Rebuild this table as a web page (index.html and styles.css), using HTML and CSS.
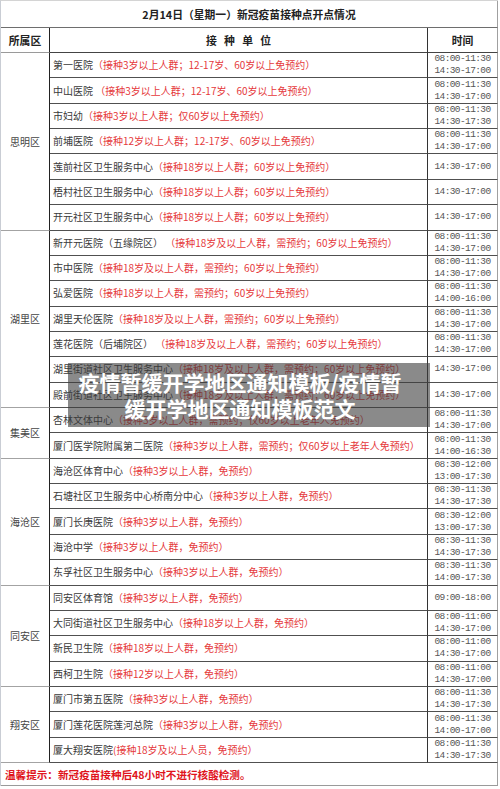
FILE: index.html
```html
<!DOCTYPE html>
<html lang="zh-CN">
<head>
<meta charset="utf-8">
<title>2月14日新冠疫苗接种点开点情况</title>
<link rel="stylesheet" href="styles.css">
</head>
<body>
<table class="sheet">
  <colgroup>
    <col class="c-area">
    <col class="c-unit">
    <col class="c-time">
  </colgroup>
  <tr class="r-title"><td colspan="3" class="title">2月14日（星期一）新冠疫苗接种点开点情况</td></tr>
  <tr class="r-head">
    <th class="h-area">所属区</th>
    <th class="h-unit">接&nbsp;&nbsp;&nbsp;种&nbsp;&nbsp;&nbsp;单&nbsp;&nbsp;&nbsp;位</th>
    <th class="h-time">时间</th>
  </tr>

  <tr class="row"><td class="area" rowspan="7">思明区</td><td class="unit">第一医院<span class="note">（接种3岁以上人群；12-17岁、60岁以上免预约）</span></td><td class="time">08:00-11:30<br>14:30-17:00</td></tr>
  <tr class="row"><td class="unit">中山医院 <span class="note">（接种3岁以上人群；12-17岁、60岁以上免预约）</span></td><td class="time">08:00-11:30<br>14:30-17:00</td></tr>
  <tr class="row"><td class="unit">市妇幼<span class="note">（接种3岁以上人群；仅60岁以上免预约）</span></td><td class="time">08:00-11:30<br>14:30-17:30</td></tr>
  <tr class="row"><td class="unit">前埔医院<span class="note">（接种12岁以上人群；12-17岁、60岁以上免预约）</span></td><td class="time">08:00-11:30<br>14:30-17:00</td></tr>
  <tr class="row"><td class="unit">莲前社区卫生服务中心<span class="note">（接种18岁以上人群；60岁以上免预约）</span></td><td class="time">14:30-17:00</td></tr>
  <tr class="row"><td class="unit">梧村社区卫生服务中心<span class="note">（接种18岁以上人群；60岁以上免预约）</span></td><td class="time">14:30-17:00</td></tr>
  <tr class="row"><td class="unit">开元社区卫生服务中心<span class="note">（接种18岁以上人群；60岁以上免预约）</span></td><td class="time">14:30-17:00</td></tr>

  <tr class="row"><td class="area" rowspan="7">湖里区</td><td class="unit">新开元医院（五缘院区） <span class="note">（接种18岁及以上人群，需预约；60岁以上免预约）</span></td><td class="time">08:00-11:30<br>14:30-17:00</td></tr>
  <tr class="row"><td class="unit">市中医院<span class="note">（接种18岁及以上人群，需预约；60岁以上免预约）</span></td><td class="time">08:00-11:30<br>14:30-17:00</td></tr>
  <tr class="row"><td class="unit">弘爱医院<span class="note">（接种18岁以上人群，需预约；60岁以上免预约）</span></td><td class="time">08:00-11:30<br>14:00-16:00</td></tr>
  <tr class="row"><td class="unit">湖里天伦医院<span class="note">（接种18岁及以上人群，需预约；60岁以上免预约）</span></td><td class="time">08:00-11:30<br>14:30-17:00</td></tr>
  <tr class="row"><td class="unit">莲花医院（后埔院区） <span class="note">（接种18岁及以上人群，需预约；60岁以上免预约）</span></td><td class="time">08:00-11:30<br>14:30-17:00</td></tr>
  <tr class="row"><td class="unit">湖里街道社区卫生服务中心<span class="note">（接种18岁及以上人群，需预约；60岁以上免预约）</span></td><td class="time">14:30-17:00</td></tr>
  <tr class="row"><td class="unit">殿前街道社区卫生服务中心<span class="note">（接种18岁及以上人群，需预约；60岁以上免预约）</span></td><td class="time">14:30-17:00</td></tr>

  <tr class="row"><td class="area" rowspan="2">集美区</td><td class="unit">杏林文体中心<span class="note">（接种3岁以上人群，需预约；仅60岁以上老年人免预约）</span></td><td class="time">08:00-11:30<br>14:30-17:00</td></tr>
  <tr class="row"><td class="unit">厦门医学院附属第二医院<span class="note">（接种3岁以上人群，需预约；仅60岁以上老年人免预约）</span></td><td class="time">08:00-11:30<br>14:00-16:30</td></tr>

  <tr class="row"><td class="area" rowspan="5">海沧区</td><td class="unit">海沧区体育中心<span class="note">（接种3岁以上人群，免预约）</span></td><td class="time">08:30-12:00<br>13:00-17:30</td></tr>
  <tr class="row"><td class="unit">石塘社区卫生服务中心桥南分中心<span class="note">（接种3岁以上人群，免预约）</span></td><td class="time">08:30-11:30<br>14:30-17:30</td></tr>
  <tr class="row"><td class="unit">厦门长庚医院<span class="note">（接种3岁以上人群，免预约）</span></td><td class="time">08:30-12:00<br>13:00-17:30</td></tr>
  <tr class="row"><td class="unit">海沧中学<span class="note">（接种3岁以上人群，免预约）</span></td><td class="time">08:30-11:30<br>14:30-17:30</td></tr>
  <tr class="row"><td class="unit">东孚社区卫生服务中心<span class="note">（接种3岁以上人群，免预约）</span></td><td class="time">08:30-11:30<br>14:00-17:30</td></tr>

  <tr class="row"><td class="area" rowspan="4">同安区</td><td class="unit">同安区体育馆<span class="note">（接种3岁以上人群，免预约）</span></td><td class="time">09:00-18:00</td></tr>
  <tr class="row"><td class="unit">大同街道社区卫生服务中心<span class="note">（接种18岁以上人群，免预约）</span></td><td class="time">08:00-11:00<br>14:30-17:00</td></tr>
  <tr class="row"><td class="unit">新民卫生院<span class="note">（接种18岁以上人群，免预约）</span></td><td class="time">08:00-11:00<br>14:30-17:00</td></tr>
  <tr class="row"><td class="unit">西柯卫生院<span class="note">（接种12岁以上人群，免预约）</span></td><td class="time">08:00-11:00<br>14:30-17:00</td></tr>

  <tr class="row"><td class="area" rowspan="3">翔安区</td><td class="unit">厦门市第五医院<span class="note">（接种3岁以上人群，免预约）</span></td><td class="time">08:00-11:30<br>14:30-17:30</td></tr>
  <tr class="row"><td class="unit">厦门莲花医院莲河总院<span class="note">（接种3岁以上人群，免预约）</span></td><td class="time">08:00-11:30<br>14:00-17:00</td></tr>
  <tr class="row"><td class="unit">厦大翔安医院<span class="note">(接种18岁及以上人员，免预约）</span></td><td class="time">08:00-11:30<br>14:30-17:30</td></tr>

  <tr class="r-foot"><td colspan="3" class="foot">温馨提示：新冠疫苗接种后48小时不进行核酸检测。</td></tr>
</table>

<div class="watermark">疫情暂缓开学地区通知模板/疫情暂缓开学地区通知模板范文</div>
</body>
</html>
```
FILE: styles.css
```css
html, body {
  margin: 0;
  padding: 0;
  background: #ffffff;
}

body {
  width: 500px;
  height: 789px;
  overflow: hidden;
  font-family: "Noto Sans CJK SC", "Noto Sans", sans-serif;
  color: #333;
}

.sheet {
  border-collapse: separate;
  border-spacing: 0;
  table-layout: fixed;
  width: 498px;
  border-left: 1px solid #c9cdd4;
  border-top: 1px solid #d4d4d4;
}

.c-area { width: 49px; }
.c-unit { width: 378px; }
.c-time { width: 70px; }

.sheet td, .sheet th {
  padding: 0;
  box-sizing: border-box;
  white-space: nowrap;
  overflow: hidden;
}

.r-title { height: 27px; }
.r-head { height: 25px; }
.row { height: 25.36px; }
.r-foot { height: 23px; }

.title {
  text-align: center;
  font-weight: 700;
  font-size: 10.8px;
  color: #222;
  border-right: 1px solid #a0a0a0;
  border-bottom: 1px solid #6e6e6e;
}

.r-head th {
  font-weight: 700;
  font-size: 10.8px;
  color: #222;
  text-align: center;
}

.h-area {
  border-right: 1px solid #222;
  border-bottom: 1px solid #9a9a9a;
}

.h-unit {
  border-right: 1px solid #333;
  border-bottom: 1px solid #444;
}

.h-time {
  border-right: 1px solid #a0a0a0;
  border-bottom: 1px solid #444;
}

.area {
  text-align: center;
  vertical-align: middle;
  font-size: 10px;
  color: #444;
  border-right: 1px solid #222;
  border-bottom: 1px solid #a3a3a3;
}

.unit {
  font-size: 10px;
  line-height: 12px;
  color: #3a3a3a;
  padding-left: 3px !important;
  vertical-align: middle;
  border-right: 1px solid #333;
  border-bottom: 1px solid #505050;
}

.note {
  color: #e5393b;
}

.time {
  text-align: center;
  vertical-align: middle;
  font-family: "Liberation Mono", "DejaVu Sans Mono", monospace;
  font-size: 9.5px;
  letter-spacing: -0.6px;
  line-height: 12px;
  color: #555;
  border-right: 1px solid #a0a0a0;
  border-bottom: 1px solid #505050;
}

.foot {
  text-align: left;
  vertical-align: middle;
  padding-left: 4px !important;
  font-size: 10.6px;
  font-weight: 700;
  color: #e0141c;
  border-right: 1px solid #a0a0a0;
  border-bottom: 1px solid #9a9a9a;
}

.watermark {
  position: absolute;
  left: 68px;
  top: 363px;
  width: 362px;
  height: 64px;
  box-sizing: border-box;
  padding: 6px 25px 6px 7px;
  background: rgba(60, 60, 60, 0.6);
  color: #ffffff;
  font-family: "Noto Sans CJK SC", "Noto Sans", sans-serif;
  font-weight: 700;
  font-size: 21px;
  line-height: 26px;
  text-align: center;
}
```
